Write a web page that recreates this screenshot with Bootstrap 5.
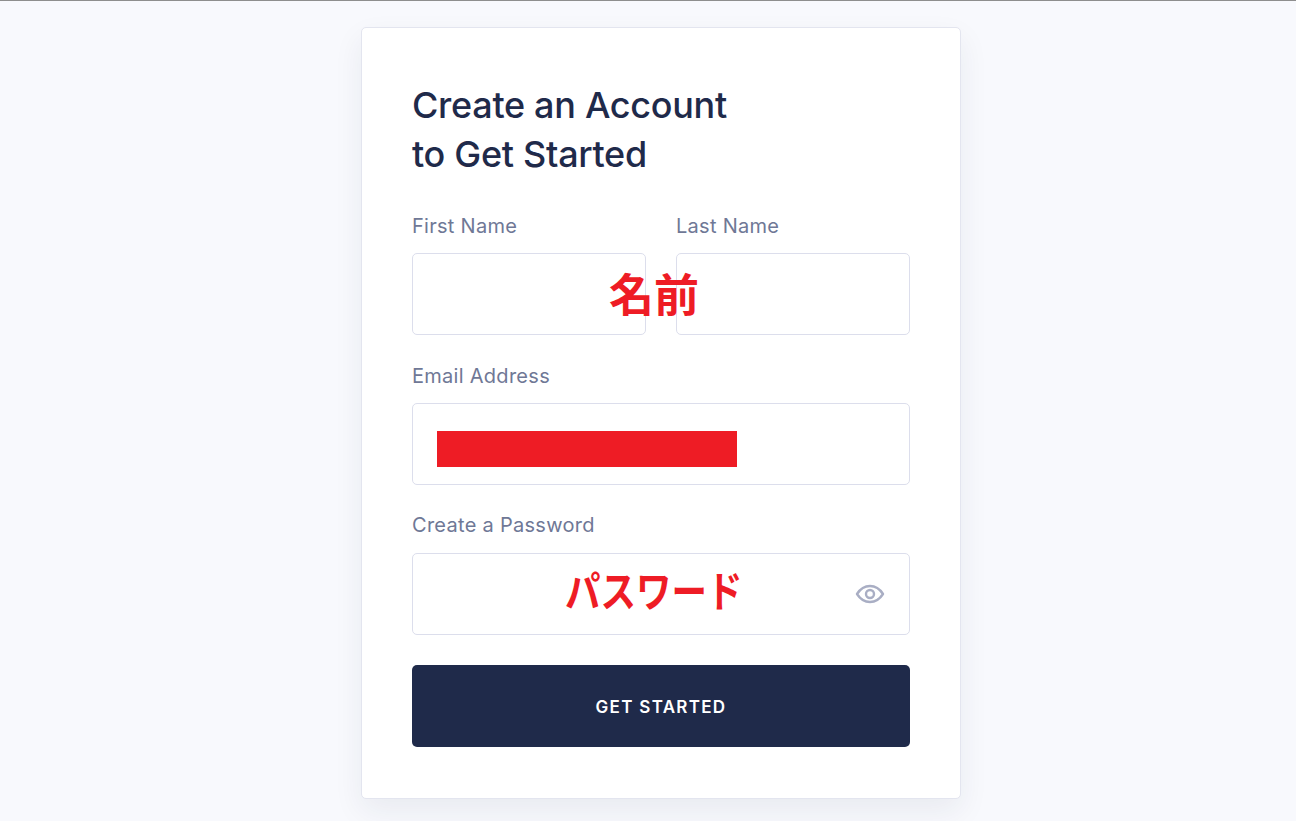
<!DOCTYPE html>
<html lang="en">
<head>
<meta charset="utf-8">
<title>Create an Account</title>
<link href="https://cdn.jsdelivr.net/npm/bootstrap@5.3.0/dist/css/bootstrap.min.css" rel="stylesheet">
<style>
html,body{height:821px;overflow:hidden}
body{background:#f8f9fd;font-family:"Inter","Liberation Sans",sans-serif;border-top:1px solid #8e8e8e}
.stage{padding:26px 0 0 26px}
.signup{width:600px;height:772px;background:#fff;border:1px solid #e3e5ef;border-radius:5px;padding:50px;box-shadow:0 12px 30px rgba(30,42,75,.07)}
.signup h1{font-family:"Inter",sans-serif;font-size:36px;line-height:49px;font-weight:500;color:#1f2a4a;letter-spacing:-.3px;margin:3px 0 33px 0}
.fld-label{display:block;font-size:20px;letter-spacing:.28px;line-height:28px;color:#6f7896;margin:0 0 13px 0}
.fld-box{height:82px;border:1px solid #dcdeec;border-radius:5px;background:#fff;width:100%}
.fld-row{gap:30px;margin-bottom:27px}
.fld-row>div{flex:1 1 0}
.fld-mb{margin-bottom:26px}
.fld-last{margin-bottom:30px}
.fld-last .fld-label{margin-bottom:14px}
.redact{color:#ee1c25;font-family:"Noto Sans CJK JP",sans-serif;font-weight:700;line-height:1}
.redact-name{position:absolute;left:197px;top:58px;font-size:45px}
.redact-pass{position:absolute;left:152px;top:13px;font-size:35.500px;transform:scaleY(1.2);transform-origin:top left}
.redact-bar{position:absolute;left:24px;top:27px;width:300px;height:36px;background:#ee1c25}
.eye{position:absolute;right:24px;top:25px;width:30px;height:30px}
.go{height:82px;width:100%;background:#1f2a4a;color:#fff;border:0;border-radius:5px;font-size:17px;font-weight:600;letter-spacing:1.3px;padding-top:10px}
.go:hover{background:#1f2a4a;color:#fff}
</style>
</head>
<body>
<div class="stage d-flex justify-content-center">
<form class="signup">
<h1>Create an Account<br>to Get Started</h1>
<div class="d-flex fld-row position-relative">
<div><label class="fld-label">First Name</label><div class="fld-box"></div></div>
<div><label class="fld-label">Last Name</label><div class="fld-box"></div></div>
<span class="redact redact-name">名前</span>
</div>
<div class="fld-mb">
<label class="fld-label">Email Address</label>
<div class="fld-box position-relative"><span class="redact-bar"></span></div>
</div>
<div class="fld-last">
<label class="fld-label">Create a Password</label>
<div class="fld-box position-relative">
<span class="redact redact-pass">パスワード</span>
<svg class="eye" viewBox="0 0 30 30" fill="none" stroke="#a9aec4" stroke-width="2.4" stroke-linejoin="round"><path d="M2 15C5.5 9.5 10 7 15 7s9.500 2.500 13 8c-3.500 5.500-8 8-13 8S5.500 20.500 2 15Z"/><circle cx="15" cy="15" r="4"/></svg>
</div>
</div>
<button type="button" class="btn go">GET STARTED</button>
</form>
</div>
<script src="https://cdn.jsdelivr.net/npm/bootstrap@5.3.0/dist/js/bootstrap.bundle.min.js"></script>
</body>
</html>
